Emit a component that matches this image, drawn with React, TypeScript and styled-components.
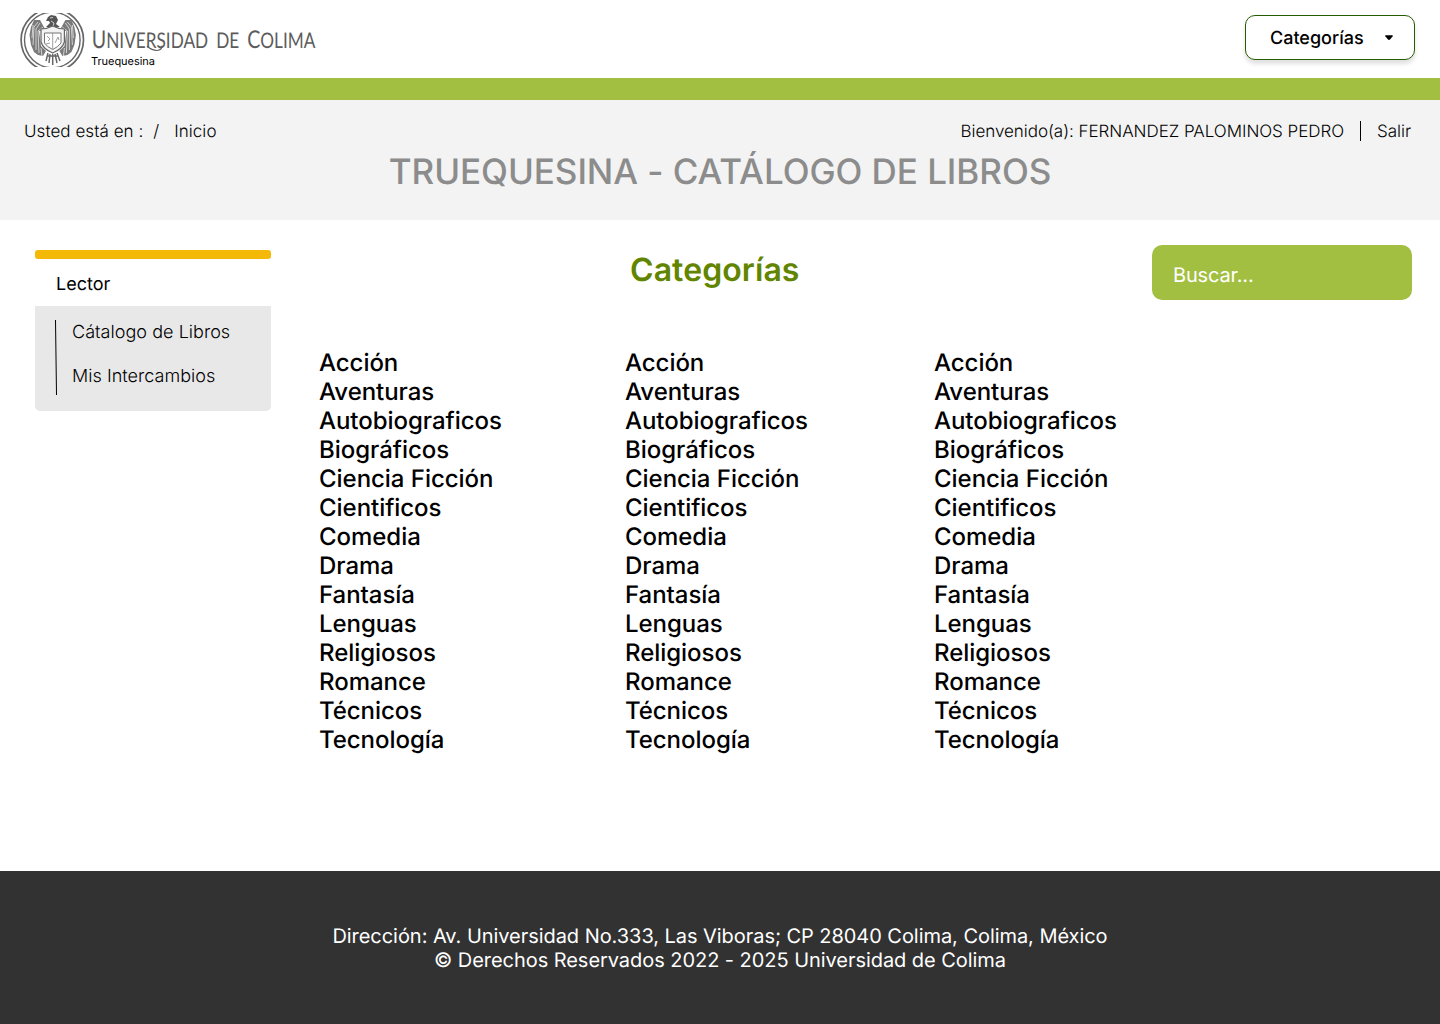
import React from 'react';
import styled, { createGlobalStyle } from 'styled-components';

const GlobalStyle = createGlobalStyle`
  *, *::before, *::after { box-sizing: border-box; }
  body {
    margin: 0;
    background: #fff;
    color: #000;
    font-family: Inter, "Liberation Sans", sans-serif;
    text-rendering: geometricPrecision;
  }
  h1, h2, p, ul { margin: 0; padding: 0; }
  ul { list-style: none; }
`;

const Page = styled.div`
  display: flex;
  flex-direction: column;
  width: 1440px;
  height: 1024px;
  overflow: hidden;
`;

const TopBar = styled.header`
  display: flex;
  justify-content: space-between;
  align-items: flex-start;
  height: 100px;
  padding: 13px 25px 0 20px;
  border-bottom: 22px solid #a3bf42;
`;

const Brand = styled.div`
  display: flex;
  gap: 6px;
`;

const BrandText = styled.div`
  position: relative;
  display: flex;
  flex-direction: column;
  padding-top: 13px;
`;

const Wordmark = styled.div`
  display: flex;
  gap: 10px;
  width: 224px;
  height: 26px;
  padding-left: 1px;
  transform: scaleX(0.8);
  transform-origin: left;
  color: #5c5c5c;
  font-family: Lato, sans-serif;
  font-size: 21.5px;
  line-height: 28px;
  white-space: nowrap;
`;

const Word = styled.span<{ $initial?: number }>`
  display: block;
  &::first-letter { font-size: ${(p) => p.$initial ?? 21.5}px; }
`;

const Swash = styled.svg`
  position: absolute;
  left: 54px;
  top: 30px;
`;

const AppName = styled.span`
  margin-top: 3px;
  font-size: 11px;
  line-height: 13px;
  letter-spacing: -0.04px;
`;

const CategoryButton = styled.button`
  display: flex;
  align-items: center;
  justify-content: space-between;
  width: 170px;
  height: 45px;
  margin-top: 2px;
  padding: 0 21px 0 24px;
  border: 1px solid #265c00;
  border-radius: 10px;
  background: #fff;
  box-shadow: 0 4px 4px rgba(0, 0, 0, 0.12);
  color: #000;
  font: 500 18px/22px Inter, sans-serif;
  text-rendering: geometricPrecision;
`;

const ButtonLabel = styled.span`
  padding-top: 2px;
`;

const SubHeader = styled.section`
  height: 120px;
  padding: 21px 29px 0 24px;
  background: #f3f3f3;
`;

const InfoRow = styled.div`
  display: flex;
  justify-content: space-between;
  font-size: 17px;
  font-weight: 300;
  line-height: 21px;
`;

const InfoGroup = styled.div<{ $gap: number; $tracking: number }>`
  display: flex;
  gap: ${(p) => p.$gap}px;
  letter-spacing: ${(p) => p.$tracking}px;
  white-space: pre;
`;

const InfoText = styled.span`
  padding-top: 1px;
`;

const Divider = styled.span`
  width: 1px;
  height: 20px;
  background: #000;
`;

const PageTitle = styled.h1`
  margin: 7px -5px 0 0;
  color: #8c8c8c;
  text-align: center;
  font-size: 35px;
  font-weight: 500;
  line-height: 44px;
  letter-spacing: -0.05px;
`;

const Main = styled.main`
  display: grid;
  grid-template-columns: 236px 881px 260px;
  height: 651px;
  padding: 25px 28px 0 35px;
`;

const Sidebar = styled.nav`
  padding-top: 5px;
`;

const Accent = styled.div`
  height: 9px;
  border-radius: 3px;
  background: #f4b806;
`;

const Role = styled.div`
  height: 47px;
  padding: 15px 0 0 21px;
  font-size: 18px;
  line-height: 22px;
`;

const Menu = styled.div`
  display: flex;
  gap: 15px;
  height: 105px;
  padding: 14px 0 0 20px;
  border-radius: 0 0 5px 5px;
  background: #e8e8e8;
`;

const MenuItems = styled.ul`
  display: flex;
  flex-direction: column;
  gap: 22px;
  padding-top: 2px;
  font-size: 18px;
  font-weight: 300;
  line-height: 22px;
  letter-spacing: 0.04px;
`;

const Content = styled.section`
  padding-left: 48px;
`;

const Heading = styled.h2`
  padding-left: 311px;
  margin-top: 5px;
  color: #628500;
  font-size: 32px;
  font-weight: 600;
  line-height: 39px;
  letter-spacing: 0.08px;
`;

const Columns = styled.div`
  display: grid;
  grid-template-columns: 306px 309px 1fr;
  margin-top: 59px;
`;

const CategoryList = styled.ul`
  font-size: 24px;
  font-weight: 500;
  line-height: 29px;
  letter-spacing: -0.04px;
`;

const Search = styled.input`
  width: 260px;
  height: 55px;
  padding: 5px 21px 0;
  border: 0;
  border-radius: 10px;
  background: #a3bf42;
  font: 400 20px/24px Inter, sans-serif;
  letter-spacing: -0.15px;
  text-rendering: geometricPrecision;
  &::placeholder { color: #fff; opacity: 1; }
`;

const Footer = styled.footer`
  height: 153px;
  padding-top: 53px;
  background: #323232;
  color: #fff;
  text-align: center;
  font-size: 20px;
  font-weight: 400;
  line-height: 24px;
  letter-spacing: -0.05px;
`;

const categories = [
  'Acción', 'Aventuras', 'Autobiograficos', 'Biográficos', 'Ciencia Ficción',
  'Cientificos', 'Comedia', 'Drama', 'Fantasía', 'Lenguas', 'Religiosos',
  'Romance', 'Técnicos', 'Tecnología',
];

const Wing = () => (
  <>
    <path d="M29 14 25 16 20 7 14 7 11 14 9.5 22 11 32 14 39 18 42 23 43 26 38 21 33 19 18 29 17Z" fill="#7a7a7a" stroke="none" />
    <path d="M18 9 14 14 13 32M20 10 16 16V37M23 14 18 18 19 40M13 12 12 25M21 35 22 43" stroke="#e8e8e8" strokeWidth=".8" />
  </>
);

const Crest = () => (
  <svg width="65" height="54" viewBox="0 0 65 54" fill="none" stroke="#666" aria-hidden="true">
    <circle cx="32.3" cy="27" r="31.2" strokeWidth="1.7" />
    <circle cx="32.3" cy="27" r="27.8" strokeWidth="1.4" />
    <Wing />
    <g transform="translate(65.4 0) scale(-1 1)"><Wing /></g>
    <path d="M26 14 30 10 29 8 26 8 28 4 31 2 36 3 38 7 36 11 40 14Z" fill="#555" stroke="none" />
    <path d="m30 5 3-.5M31 8l3 2-1 4" stroke="#ddd" strokeWidth=".9" />
    <path d="m28 40-2 8M30 41l-1 9M32.7 41v11M35 41l2 9M37 40l3 8M27 43h11" strokeWidth="1.5" />
    <path d="M21 16q6 0 11.7-3 5.7 3 11.7 3v13q-2 7-11.7 11Q23 36 21 29Z" fill="#f3f3f3" strokeWidth="1.2" />
    <path d="M24.5 20h16.5v10q-3 4-8.3 6.5Q27 34 24.5 30Z" fill="#fff" strokeWidth=".9" />
    <path d="M32.7 20v16M27 23l3 3-2 2M35 30l3-6 1 3M26 31l4-1" strokeWidth=".8" stroke="#888" />
  </svg>
);

export default function App() {
  return (
    <Page>
      <GlobalStyle />
      <TopBar>
        <Brand>
          <Crest />
          <BrandText>
            <Wordmark>
              <Word $initial={24.5}>UNIVERSIDAD</Word>
              <Word>DE</Word>
              <Word $initial={24.5}>COLIMA</Word>
            </Wordmark>
            <Swash width="20" height="9" viewBox="0 0 20 9" aria-hidden="true">
              <path d="M2 3q5 4.500 10 4.500 5-.5 5-5" fill="none" stroke="#5c5c5c" strokeWidth="1.2" />
            </Swash>
            <AppName>Truequesina</AppName>
          </BrandText>
        </Brand>
        <CategoryButton>
          <ButtonLabel>Categorías</ButtonLabel>
          <svg width="8" height="6" viewBox="0 0 8 6"><path d="M1 .3h6q1.200 0 .7 1L5 4.500q-1 .9-2 0L.3 1.300Q-.2 .3 1 .3Z" /></svg>
        </CategoryButton>
      </TopBar>
      <SubHeader>
        <InfoRow>
          <InfoGroup $gap={10} $tracking={0.06}>
            <InfoText>Usted está en :</InfoText><InfoText>/</InfoText><InfoText> Inicio</InfoText>
          </InfoGroup>
          <InfoGroup $gap={16} $tracking={-0.04}>
            <InfoText>Bienvenido(a): FERNANDEZ PALOMINOS PEDRO</InfoText><Divider /><InfoText>Salir</InfoText>
          </InfoGroup>
        </InfoRow>
        <PageTitle>TRUEQUESINA - CATÁLOGO DE LIBROS</PageTitle>
      </SubHeader>
      <Main>
        <Sidebar>
          <Accent />
          <Role>Lector</Role>
          <Menu>
            <svg width="2" height="75" viewBox="0 0 2 75"><path d="M.5 0 1.5 75" stroke="#000" /></svg>
            <MenuItems><li>Cátalogo de Libros</li><li>Mis Intercambios</li></MenuItems>
          </Menu>
        </Sidebar>
        <Content>
          <Heading>Categorías</Heading>
          <Columns>
            {[0, 1, 2].map((column) => (
              <CategoryList key={column}>
                {categories.map((name) => <li key={name}>{name}</li>)}
              </CategoryList>
            ))}
          </Columns>
        </Content>
        <Search placeholder="Buscar..." />
      </Main>
      <Footer>
        <p>Dirección: Av. Universidad No.333, Las Viboras; CP 28040 Colima, Colima, México</p>
        <p>© Derechos Reservados 2022 - 2025 Universidad de Colima</p>
      </Footer>
    </Page>
  );
}
